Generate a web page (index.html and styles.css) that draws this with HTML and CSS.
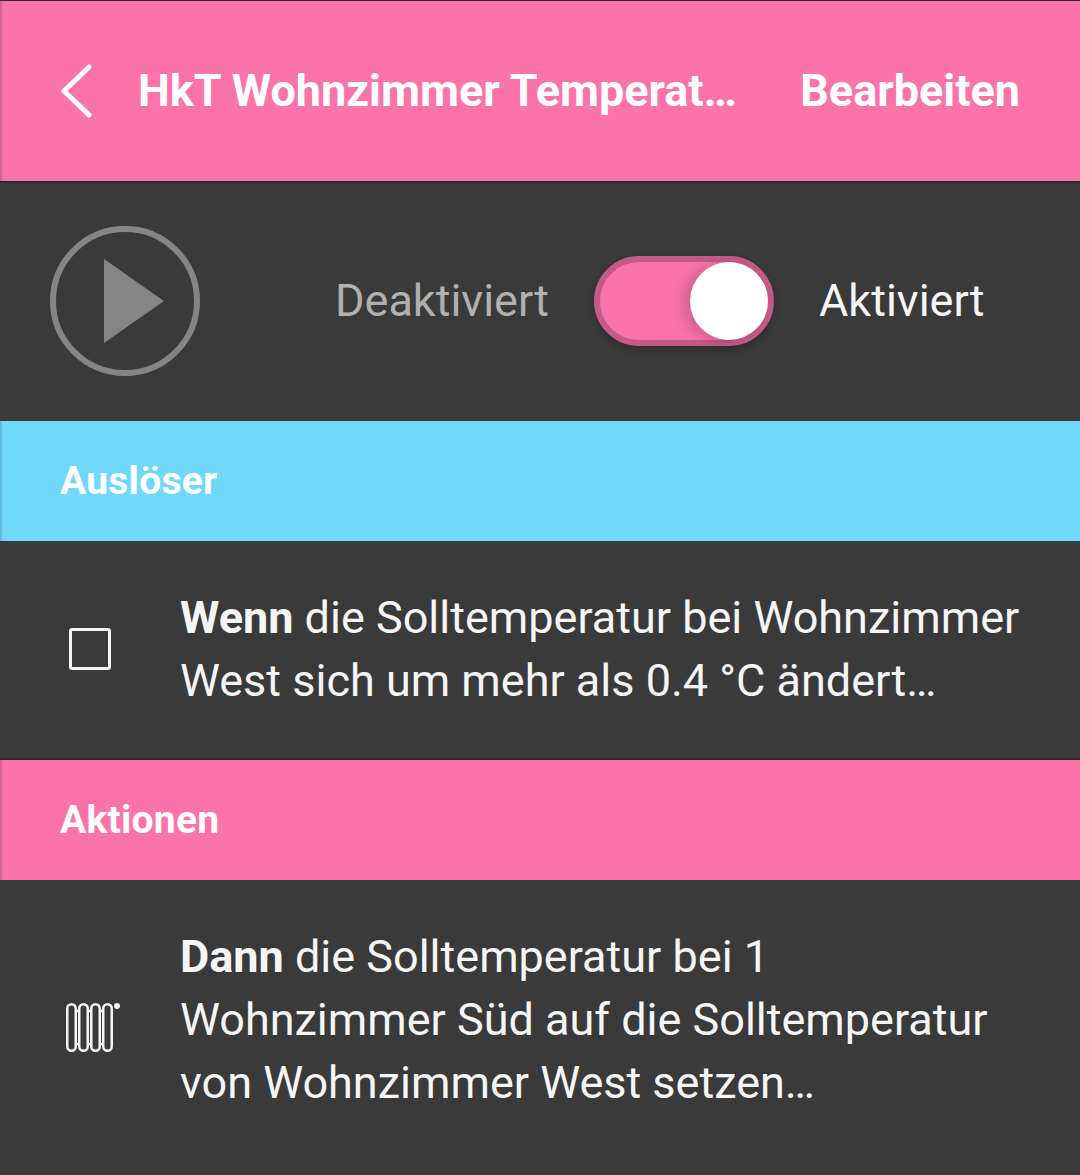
FILE: index.html
```html
<!DOCTYPE html>
<html>

<head>
    <meta charset="utf-8">
    <title>HkT Wohnzimmer Temperatur</title>
    <link rel="stylesheet" href="styles.css">
</head>

<body>
    <div class="header">
        <svg class="back" width="32" height="54" viewBox="0 0 32 54">
            <path d="M29 3 L4 27 L29 51" fill="none" stroke="#fff" stroke-width="5" stroke-linecap="round" stroke-linejoin="round" />
        </svg>
        <div class="title">HkT Wohnzimmer Temperat…</div>
        <div class="edit">Bearbeiten</div>
    </div>

    <div class="controls">
        <svg class="play" width="150" height="150" viewBox="0 0 150 150">
            <circle cx="75" cy="75" r="72" fill="none" stroke="#858585" stroke-width="6" />
            <path d="M54 33 L114 75 L54 117 Z" fill="#858585" />
        </svg>
        <div class="label off">Deaktiviert</div>
        <div class="switch">
            <div class="knob"></div>
        </div>
        <div class="label on">Aktiviert</div>
    </div>

    <div class="section blue">Auslöser</div>
    <div class="row trigger">
        <div class="row-icon">
            <div class="checkbox"></div>
        </div>
        <div class="row-text"><b>Wenn</b> die Solltemperatur bei Wohnzimmer West sich um mehr als 0.4 °C ändert…</div>
    </div>

    <div class="section pink">Aktionen</div>
    <div class="row action">
        <div class="row-icon">
            <svg width="60" height="64" viewBox="0 0 60 64" fill="none" stroke="#f5f5f5" stroke-width="2.5">
                <rect x="7.25" y="16.25" width="8.5" height="46.5" rx="4.25" />
                <rect x="19.25" y="16.25" width="8.5" height="46.5" rx="4.25" />
                <rect x="31.25" y="16.25" width="8.5" height="46.5" rx="4.25" />
                <rect x="43.25" y="16.25" width="8.5" height="46.5" rx="4.25" />
                <path d="M16 23 H19 M28 23 H31 M40 23 H43 M16 56 H19 M28 56 H31 M40 56 H43" />
                <circle cx="57" cy="18" r="3" fill="#f5f5f5" stroke="none" />
            </svg>
        </div>
        <div class="row-text"><b>Dann</b> die Solltemperatur bei 1 Wohnzimmer Süd auf die Solltemperatur von Wohnzimmer West setzen…</div>
    </div>
</body>

</html>
```

FILE: styles.css
```css
* {
    box-sizing: border-box;
    font-family: Roboto, "Liberation Sans", sans-serif;
}

body {
    margin: 0;
    height: 1175px;
    overflow: hidden;
    background-color: #3a3a3a;
    color: #f5f5f5;
}

.header {
    display: flex;
    align-items: center;
    height: 181px;
    padding: 0 60px;
    background-color: #fa73a9;
    border-top: 1px solid #2a2a2a;
    box-shadow: 0 1px 2px rgba(0, 0, 0, 0.4), inset 3px 0 3px -2px rgba(0, 0, 0, 0.25);
    color: #fff;
    font-size: 45px;
    font-weight: 700;
}

.back {
    flex-shrink: 0;
    margin-right: 46px;
}

.title {
    flex-grow: 1;
    white-space: nowrap;
    margin-top: -2px;
}

.edit {
    margin-top: -2px;
}

.controls {
    display: flex;
    align-items: center;
    height: 240px;
    padding-left: 50px;
}

.play {
    flex-shrink: 0;
    margin-right: 135px;
}

.label {
    font-size: 45px;
    margin-top: -2px;
}

.off {
    color: #b0b0b0;
}

.switch {
    display: flex;
    align-items: center;
    justify-content: flex-end;
    width: 180px;
    height: 90px;
    margin: 0 45px;
    background-color: #fa73a9;
    border: 6px solid #c65a87;
    border-radius: 45px;
    box-shadow: 0 4px 10px rgba(0, 0, 0, 0.2);
}

.knob {
    width: 78px;
    height: 78px;
    background-color: #fff;
    border-radius: 50%;
    box-shadow: -6px 2px 14px rgba(0, 0, 0, 0.18);
}

.section {
    display: flex;
    align-items: center;
    height: 120px;
    padding-left: 60px;
    color: #fff;
    font-size: 39px;
    font-weight: 700;
    letter-spacing: 0.25px;
    box-shadow: inset 3px 0 3px -2px rgba(0, 0, 0, 0.25);
}

.blue {
    background-color: #70d9f9;
}

.pink {
    background-color: #fa73a9;
    border-top: 2px solid #2a2a2a;
    height: 122px;
}

.row {
    display: flex;
    align-items: center;
}

.trigger {
    height: 217px;
    padding-bottom: 2px;
}

.action {
    height: 295px;
    padding-bottom: 16px;
}

.row-icon {
    display: flex;
    justify-content: center;
    align-items: center;
    flex-shrink: 0;
    width: 180px;
}

.checkbox {
    width: 42px;
    height: 42px;
    border: 3px solid #f5f5f5;
    border-radius: 3px;
}

.row-text {
    width: 842px;
    font-size: 45px;
    line-height: 63px;
    font-weight: 400;
}
```
